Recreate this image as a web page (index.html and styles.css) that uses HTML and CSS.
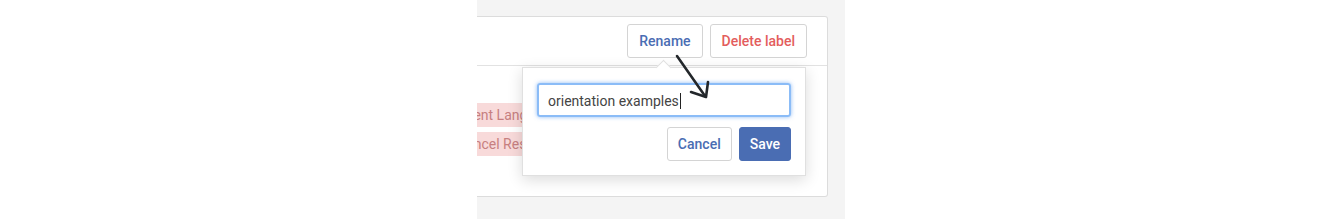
FILE: index.html
```html
<!DOCTYPE html>
<html lang="en">
<head>
  <meta charset="UTF-8">
  <title>Rename label</title>
  <link rel="stylesheet" href="styles.css">
</head>
<body>
  <div class="stage">
    <div class="card">
      <div class="card-header">
        <button class="btn btn-blue">Rename</button>
        <button class="btn btn-red">Delete label</button>
      </div>
      <div class="card-body">
        <span class="tag tag-first">Recent Language</span>
        <span class="tag">Cancel Reservation</span>
      </div>

      <div class="popover">
        <div class="popover-arrow"></div>
        <div class="input-box">orientation examples<span class="caret"></span></div>
        <div class="popover-actions">
          <button class="btn btn-blue">Cancel</button>
          <button class="btn btn-primary">Save</button>
        </div>
      </div>

      <!-- annotation arrow drawn over the screenshot -->
      <svg class="pointer" width="50" height="60" viewBox="0 0 50 60">
        <path d="M6 6 L34 46" stroke="#23272b" stroke-width="2.6" stroke-linecap="round" fill="none"/>
        <path d="M20 42 L35 47 L37 32" stroke="#23272b" stroke-width="2.6" stroke-linecap="round" stroke-linejoin="round" fill="none"/>
      </svg>
    </div>
  </div>
</body>
</html>
```

FILE: styles.css
```css
body {
  margin: 0;
  background: #fff;
  font-family: Roboto, "Liberation Sans", Arial, sans-serif;
}

.stage {
  margin-left: 477px;
  width: 368px;
  height: 219px;
  padding-top: 16px;
  box-sizing: border-box;
  background: #f4f4f4;
  overflow: hidden;
}

.card {
  position: relative;
  width: 351px;
  height: 181px;
  box-sizing: border-box;
  background: #fff;
  border: 1px solid #dcdcdc;
  border-left: none;
  border-radius: 0 3px 3px 0;
}

.card-header {
  height: 49px;
  display: flex;
  justify-content: flex-end;
  align-items: flex-start;
  gap: 7px;
  padding: 7px 20px 0 0;
  box-sizing: border-box;
  border-bottom: 1px solid #e2e2e2;
}

.btn {
  height: 34px;
  padding: 0 11px;
  font-family: Roboto, "Liberation Sans", Arial, sans-serif;
  font-size: 14px;
  font-weight: 500;
  background: #fff;
  border: 1px solid #d4d4d4;
  border-radius: 3px;
  cursor: pointer;
}

.btn-blue {
  color: #4a6db3;
}

.btn-red {
  color: #e35d5d;
}

.btn-primary {
  color: #fff;
  background: #4a6db3;
  border-color: #4a6db3;
}

.card-body {
  display: flex;
  flex-direction: column;
  align-items: flex-start;
  gap: 5px;
  padding-top: 37px;
  margin-left: -26px;
}

.tag {
  height: 24px;
  line-height: 24px;
  padding: 0 6px;
  font-size: 14px;
  color: #c77f80;
  background: #f8dada;
  white-space: nowrap;
}

.tag-first {
  margin-left: -7px;
}

.popover {
  position: absolute;
  left: 45px;
  top: 50px;
  width: 284px;
  height: 109px;
  box-sizing: border-box;
  padding: 15px 14px 0 14px;
  background: #fff;
  border: 1px solid #e0e0e0;
  box-shadow: 0 4px 14px rgba(0, 0, 0, 0.14);
}

.popover-arrow {
  position: absolute;
  top: -6px;
  left: 135px;
  width: 10px;
  height: 10px;
  background: #fff;
  border-top: 1px solid #e0e0e0;
  border-left: 1px solid #e0e0e0;
  transform: rotate(45deg);
}

.input-box {
  height: 34px;
  line-height: 32px;
  box-sizing: border-box;
  padding: 0 9px;
  font-size: 14px;
  color: #444;
  border: 2px solid #8bbcf7;
  border-radius: 3px;
  box-shadow: 0 0 4px rgba(100, 160, 240, 0.7);
}

.caret {
  display: inline-block;
  width: 1px;
  height: 16px;
  margin-left: 1px;
  vertical-align: -3px;
  background: #222;
}

.popover-actions {
  display: flex;
  justify-content: flex-end;
  gap: 7px;
  margin-top: 10px;
}

.popover-actions .btn {
  padding: 0 10px;
}

.pointer {
  position: absolute;
  left: 194px;
  top: 33px;
}
```
